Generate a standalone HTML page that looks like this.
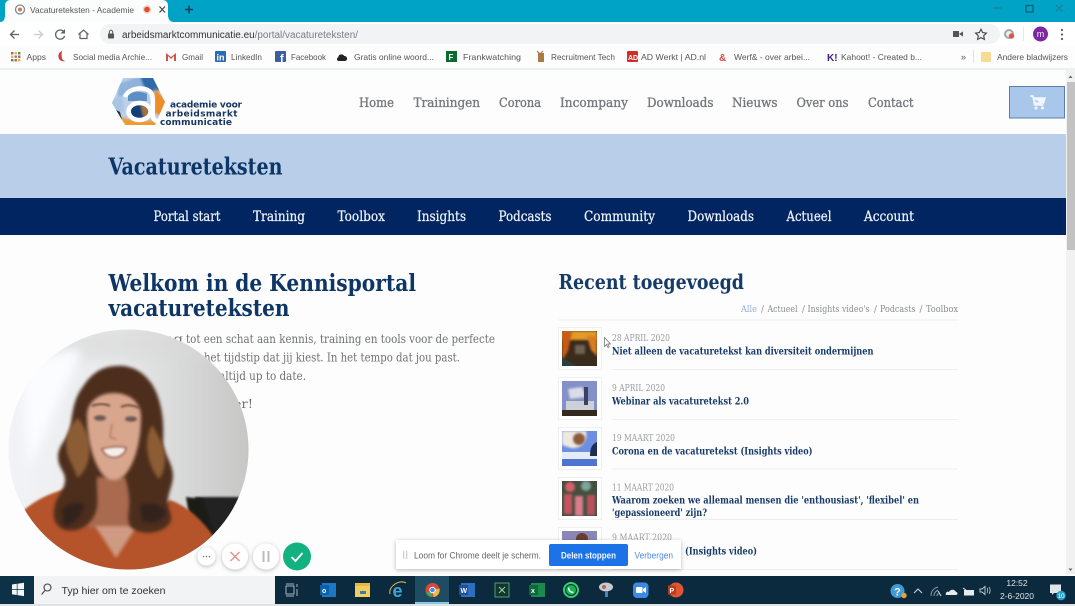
<!DOCTYPE html>
<html lang="nl"><head><meta charset="utf-8"><title>Vacatureteksten</title>
<style>
html,body{margin:0;padding:0;background:#fff;width:1075px;height:606px;overflow:hidden}
svg{display:block;position:absolute;left:0;top:0}
.s{font-family:"Liberation Sans",sans-serif}
.d{font-family:"DejaVu Sans","Liberation Sans",sans-serif}
.r{font-family:"DejaVu Serif","Liberation Serif",serif}
.sf{filter:url(#t)}
</style></head><body>
<svg width="1075" height="606" viewBox="0 0 1075 606" xmlns="http://www.w3.org/2000/svg">
<defs>
<filter id="t" x="-5%" y="-20%" width="110%" height="140%"><feGaussianBlur stdDeviation="0.35"/></filter>
<filter id="b1" x="-30%" y="-30%" width="160%" height="160%"><feGaussianBlur stdDeviation="1"/></filter>
<filter id="b4" x="-50%" y="-50%" width="200%" height="200%"><feGaussianBlur stdDeviation="5"/></filter>
<filter id="b2" x="-30%" y="-30%" width="160%" height="160%"><feGaussianBlur stdDeviation="1.600"/></filter>
<filter id="sh" x="-30%" y="-50%" width="160%" height="200%"><feDropShadow dx="0" dy="1" stdDeviation="2" flood-color="#000" flood-opacity=".28"/></filter>
<clipPath id="cam"><circle cx="128.500" cy="449.500" r="120"/></clipPath>
<clipPath id="hex"><path d="M123 78h30l12 24-10 23h-30l-13-22z"/></clipPath>
<linearGradient id="wall" x1="0" y1="0" x2="1" y2="0"><stop offset="0" stop-color="#f2f3f6"/><stop offset=".45" stop-color="#e9eaeb"/><stop offset="1" stop-color="#c6c6c5"/></linearGradient>
</defs>

<!-- Page -->
<rect width="1075" height="606" fill="#fdfdfe"/>
<rect x="0" y="134" width="1066" height="64" fill="#b8cee9"/>
<rect x="0" y="198" width="1066" height="37" fill="#002561"/>

<!-- Chrome tab strip -->
<rect width="1075" height="22" fill="#00a3c6"/>
<path d="M0 22C4 22 5 19 5 15V6C5 2 7 0 11 0H162C166 0 168 2 168 6V15C168 19 170 22 174 22Z" fill="#fbfdfd"/>
<rect y="22" width="1075" height="23" fill="#fff"/>
<rect y="45" width="1075" height="24" fill="#fdfdfd"/>
<rect y="68" width="1075" height="2" fill="#eceff3"/>
<circle cx="20" cy="9.500" r="4.500" fill="#fff" stroke="#7d8a9a" stroke-width="1.300"/><circle cx="20" cy="9.500" r="2" fill="#d57a45"/>
<g class="sf">
<text x="30" y="13" class="s" font-size="8.500" fill="#555" textLength="104" lengthAdjust="spacingAndGlyphs">Vacatureteksten - Academie</text>
<circle cx="147" cy="9.500" r="4.200" fill="#f8d0c8"/><circle cx="147" cy="9.500" r="2.800" fill="#e2492f"/>
<path d="M159.500 6.500l5.500 6M165 6.500l-5.500 6" stroke="#444" stroke-width="1.200"/>
<path d="M185 9.500h8M189 5.500v8" stroke="#0b3f58" stroke-width="1.500"/>
<path d="M994 8h8" stroke="#1f7f98" stroke-width="1.200"/>
<rect x="1026" y="5.500" width="7" height="6.500" fill="none" stroke="#0c6279" stroke-width="1.300"/>
<path d="M1056 5l6.500 6.500M1062.500 5l-6.500 6.500" stroke="#1f7f98" stroke-width="1.200"/>
</g>

<!-- Toolbar -->
<rect x="100" y="24" width="900" height="20" rx="10" fill="#f1f3f4"/>
<g class="sf">
<path d="M19 34.500h-8M14.500 30.500l-4 4 4 4" fill="none" stroke="#5f6368" stroke-width="1.300"/>
<path d="M34 34.500h8M38.500 30.500l4 4-4 4" fill="none" stroke="#c9cccf" stroke-width="1.300"/>
<path d="M64 32a4.600 4.600 0 1 0 .6 4" fill="none" stroke="#5f6368" stroke-width="1.300"/><path d="M65 29v4.500h-4.500z" fill="#5f6368"/>
<path d="M78.500 34.500l5-4.500 5 4.500M80 33.500v5h7v-5" fill="none" stroke="#5f6368" stroke-width="1.200"/>
<rect x="108" y="33.500" width="6" height="5" rx=".8" fill="#555"/><path d="M109.300 33.500v-1.500a1.700 1.700 0 0 1 3.400 0v1.500" fill="none" stroke="#555"/>
<text x="122" y="38" class="s" font-size="10" textLength="236" lengthAdjust="spacingAndGlyphs"><tspan fill="#333">arbeidsmarktcommunicatie.eu</tspan><tspan fill="#7a7d80">/portal/vacatureteksten/</tspan></text>
<rect x="953" y="31" width="6" height="6" fill="#555"/><path d="M959 34l4-2.500v5z" fill="#555"/>
<path d="M981 29.200l1.700 3.400 3.700.5-2.700 2.600.7 3.700-3.400-1.800-3.400 1.800.7-3.700-2.700-2.600 3.700-.5z" fill="none" stroke="#444" stroke-width="1.100"/>
<circle cx="1009" cy="34" r="5" fill="#9aa"/><circle cx="1009" cy="34" r="3" fill="#eee"/><circle cx="1011.500" cy="36" r="2.700" fill="#e4554a"/>
<rect x="1023" y="27" width=".8" height="14" fill="#e0e2e4"/>
<circle cx="1040.500" cy="34" r="7.500" fill="#7b27a2"/><text x="1040.500" y="37" class="s" font-size="9" fill="#f2e8f6" text-anchor="middle">m</text>
<circle cx="1062" cy="30" r="1.100" fill="#555"/><circle cx="1062" cy="34.500" r="1.100" fill="#555"/><circle cx="1062" cy="39" r="1.100" fill="#555"/>
</g>

<!-- Bookmarks -->
<g class="sf">
<g fill="#d8543f"><rect x="11" y="52" width="2.400" height="2.400"/><rect x="14.500" y="52" width="2.400" height="2.400" fill="#e6b53f"/><rect x="18" y="52" width="2.400" height="2.400" fill="#4f8a54"/><rect x="11" y="55.500" width="2.400" height="2.400" fill="#e6b53f"/><rect x="14.500" y="55.500" width="2.400" height="2.400" fill="#4f8de0"/><rect x="18" y="55.500" width="2.400" height="2.400"/><rect x="11" y="59" width="2.400" height="2.400" fill="#4f8a54"/><rect x="14.500" y="59" width="2.400" height="2.400"/><rect x="18" y="59" width="2.400" height="2.400" fill="#e6b53f"/></g>
<g class="s" font-size="8.500" fill="#555">
<text x="26.500" y="60" textLength="19.500" lengthAdjust="spacingAndGlyphs">Apps</text>
<text x="73" y="60" textLength="79" lengthAdjust="spacingAndGlyphs">Social media Archie...</text>
<text x="182" y="60" textLength="21" lengthAdjust="spacingAndGlyphs">Gmail</text>
<text x="231" y="60" textLength="31" lengthAdjust="spacingAndGlyphs">LinkedIn</text>
<text x="291" y="60" textLength="35" lengthAdjust="spacingAndGlyphs">Facebook</text>
<text x="354" y="60" textLength="80" lengthAdjust="spacingAndGlyphs">Gratis online woord...</text>
<text x="463" y="60" textLength="58" lengthAdjust="spacingAndGlyphs">Frankwatching</text>
<text x="551" y="60" textLength="64" lengthAdjust="spacingAndGlyphs">Recruitment Tech</text>
<text x="641" y="60" textLength="65" lengthAdjust="spacingAndGlyphs">AD Werkt | AD.nl</text>
<text x="734" y="60" textLength="76" lengthAdjust="spacingAndGlyphs">Werf&amp; - over arbei...</text>
<text x="841" y="60" textLength="81" lengthAdjust="spacingAndGlyphs">Kahoot! - Created b...</text>
<text x="997" y="60" textLength="71" lengthAdjust="spacingAndGlyphs">Andere bladwijzers</text>
</g>
<path d="M62 51c-3 1-4 4-3.500 6.500 .7 3 3.700 4.500 7.500 3.500-2 0-3.500-1-4-3-.6-2-.5-4.500 0-7z" fill="#c9433a"/>
<path d="M166 53v8h2v-5l3 3 3-3v5h2v-8l-5 4z" fill="#c8564d"/>
<rect x="215" y="51" width="11" height="11" rx="1" fill="#2a6cb0"/><text x="216.500" y="60.500" class="s" font-size="9" font-weight="bold" fill="#fff">in</text>
<rect x="275" y="51" width="11" height="11" rx="1" fill="#3b5f9f"/><text x="280" y="62" class="s" font-size="11" font-weight="bold" fill="#fff">f</text>
<path d="M339 61c-2.500 0-2.700-3-.7-3.800 .2-3 4-4 6-1.200 3 0 4 4 1 5z" fill="#222"/>
<rect x="446" y="51" width="11" height="11" fill="#106b2d"/><text x="448.500" y="60" class="s" font-size="8" font-weight="bold" fill="#fff">F</text>
<rect x="538" y="53" width="6" height="9" fill="#a77d43"/><path d="M537 51l3 3 3-3" stroke="#c55" fill="none"/>
<rect x="627" y="51" width="11" height="11" rx="1" fill="#d32d27"/><text x="628" y="60" class="s" font-size="7" font-weight="bold" fill="#fff">AD</text>
<text x="719" y="61" class="s" font-size="10" font-weight="bold" fill="#d24a4a">&amp;</text>
<text x="827" y="61" class="s" font-size="10" font-weight="bold" fill="#40207e">K!</text>
<text x="961" y="60" class="s" font-size="9" fill="#555">»</text>
<rect x="973" y="50" width=".8" height="13" fill="#dcdcdc"/>
<rect x="981" y="52" width="10" height="10" rx="1" fill="#f5dc92"/>
</g>

<!-- Logo -->
<g clip-path="url(#hex)">
<rect x="110" y="76" width="58" height="52" fill="#bcd0ea"/>
<path d="M118 84l22-8 8 10-30 12z" fill="#8fb3dc" filter="url(#b1)"/>
<path d="M140 76h16l6 14-16 2z" fill="#2f6bab" filter="url(#b1)"/>
<path d="M110 100l12-4 2 14-8 6z" fill="#a9c4e4" filter="url(#b1)"/>
<path d="M155 88l12 14-6 14-8-4z" fill="#ee8c28" filter="url(#b1)"/>
<path d="M118 116l10 12h32l4-8-30 1z" fill="#ef9a2e" filter="url(#b1)"/>
<path d="M112 108l8 4 2 8-4 1z" fill="#222d3d"/>
<path d="M128 94c6-3 14-3 19 0v7h-19z" fill="#5d8fc6"/>
<ellipse cx="140" cy="111" rx="9" ry="8" fill="#123f78"/>
<path d="M140 103l9 3v10l-6 2z" fill="#e7882a" opacity=".7" filter="url(#b1)"/>
</g>
<g fill="none" stroke="#fff">
<path d="M125 97c3-10 24-12 27-2 2 6 0 16 1 22 .6 4 5 5 12 5" stroke-width="4.500"/>
<ellipse cx="139.500" cy="111.500" rx="11" ry="8.500" stroke-width="4.500"/>
</g>
<g class="d sf" font-weight="bold" font-size="9" fill="#14355f">
<text x="170" y="107.500" textLength="72" lengthAdjust="spacing">academie voor</text>
<text x="165.500" y="116.500" textLength="72" lengthAdjust="spacing">arbeidsmarkt</text>
<text x="160" y="125" textLength="72" lengthAdjust="spacing">communicatie</text>
</g>

<!-- Top menu -->
<g class="r sf" font-size="13" fill="#75787b" stroke="#75787b" stroke-width=".35">
<text x="359" y="107" textLength="35" lengthAdjust="spacingAndGlyphs">Home</text>
<text x="413.500" y="107" textLength="66.500" lengthAdjust="spacingAndGlyphs">Trainingen</text>
<text x="499" y="107" textLength="42" lengthAdjust="spacingAndGlyphs">Corona</text>
<text x="560" y="107" textLength="68" lengthAdjust="spacingAndGlyphs">Incompany</text>
<text x="647" y="107" textLength="66.500" lengthAdjust="spacingAndGlyphs">Downloads</text>
<text x="732" y="107" textLength="45.500" lengthAdjust="spacingAndGlyphs">Nieuws</text>
<text x="796.500" y="107" textLength="52" lengthAdjust="spacingAndGlyphs">Over ons</text>
<text x="868" y="107" textLength="45.500" lengthAdjust="spacingAndGlyphs">Contact</text>
</g>

<!-- Cart -->
<rect x="1009.500" y="86.500" width="55" height="31.500" fill="#a9c7ea" stroke="#5a7ea8"/>
<g class="sf"><path d="M1030 96h3l1.500 9h9M1034 98h11l-1.500 5h-8.500z" fill="#f2f7fd" stroke="#f2f7fd" stroke-width="1.500"/><circle cx="1036" cy="108" r="1.500" fill="#f2f7fd"/><circle cx="1042.500" cy="108" r="1.500" fill="#f2f7fd"/></g>

<!-- Scrollbar -->
<rect x="1066" y="70" width="9" height="504" fill="#f1f1f1"/>
<rect x="1067" y="82" width="8" height="168" fill="#c2c2c2"/>
<path d="M1068.500 78l2-2.500 2 2.500z" fill="#666"/><path d="M1068.500 568.500l2 2.500 2-2.500z" fill="#666"/>

<!-- Band heading -->
<text x="108.500" y="174.500" class="r sf" font-size="23" font-weight="bold" fill="#0f3565" textLength="174" lengthAdjust="spacingAndGlyphs">Vacatureteksten</text>

<!-- Nav -->
<g class="r sf" font-size="13.500" fill="#eef2f8" stroke="#eef2f8" stroke-width=".25">
<text x="153.500" y="221" textLength="67" lengthAdjust="spacingAndGlyphs">Portal start</text>
<text x="253" y="221" textLength="52" lengthAdjust="spacingAndGlyphs">Training</text>
<text x="337.500" y="221" textLength="47.500" lengthAdjust="spacingAndGlyphs">Toolbox</text>
<text x="417" y="221" textLength="49" lengthAdjust="spacingAndGlyphs">Insights</text>
<text x="498.500" y="221" textLength="53" lengthAdjust="spacingAndGlyphs">Podcasts</text>
<text x="584" y="221" textLength="71" lengthAdjust="spacingAndGlyphs">Community</text>
<text x="687.500" y="221" textLength="66.500" lengthAdjust="spacingAndGlyphs">Downloads</text>
<text x="786.500" y="221" textLength="45" lengthAdjust="spacingAndGlyphs">Actueel</text>
<text x="864" y="221" textLength="50" lengthAdjust="spacingAndGlyphs">Account</text>
</g>

<!-- Left content -->
<g class="r sf" font-weight="bold" font-size="23" fill="#0f3565">
<text x="108.500" y="291" textLength="307.500" lengthAdjust="spacingAndGlyphs">Welkom in de Kennisportal</text>
<text x="108.500" y="316" textLength="181" lengthAdjust="spacingAndGlyphs">vacatureteksten</text>
</g>
<g class="r sf" font-size="12" fill="#6f7173">
<text x="118" y="343" textLength="65" lengthAdjust="spacingAndGlyphs">Toegang</text>
<text x="186" y="343" textLength="309" lengthAdjust="spacingAndGlyphs">tot een schat aan kennis, training en tools voor de perfecte</text>
<text x="110" y="361.500" textLength="90" lengthAdjust="spacingAndGlyphs">vacaturetekst op</text>
<text x="204" y="361.500" textLength="256" lengthAdjust="spacingAndGlyphs">het tijdstip dat jij kiest. In het tempo dat jou past.</text>
<text x="150" y="380" textLength="60" lengthAdjust="spacingAndGlyphs">En met content</text>
<text x="219" y="380" textLength="87" lengthAdjust="spacingAndGlyphs">altijd up to date.</text>
<text x="170" y="408" textLength="83" lengthAdjust="spacingAndGlyphs">Veel plezier!</text>
</g>

<!-- Right content -->
<text x="558.500" y="289" class="r sf" font-size="20.500" font-weight="bold" fill="#183a66" textLength="185.500" lengthAdjust="spacingAndGlyphs">Recent toegevoegd</text>
<g class="r sf" font-size="9" fill="#8b8d90">
<text x="741" y="312" fill="#8fadd6" textLength="16" lengthAdjust="spacingAndGlyphs">Alle</text>
<text x="761" y="312">/</text>
<text x="767.500" y="312" textLength="30" lengthAdjust="spacingAndGlyphs">Actueel</text>
<text x="802" y="312">/</text>
<text x="807.500" y="312" textLength="62" lengthAdjust="spacingAndGlyphs">Insights video's</text>
<text x="874" y="312">/</text>
<text x="880" y="312" textLength="35.500" lengthAdjust="spacingAndGlyphs">Podcasts</text>
<text x="919.500" y="312">/</text>
<text x="926" y="312" textLength="32" lengthAdjust="spacingAndGlyphs">Toolbox</text>
</g>
<g fill="#eceef0">
<rect x="558" y="319.500" width="400" height="1"/>
<rect x="612" y="369" width="346" height="1"/>
<rect x="612" y="419" width="346" height="1"/>
<rect x="612" y="468.500" width="346" height="1"/>
<rect x="612" y="519" width="346" height="1"/>
<rect x="612" y="569" width="346" height="1"/>
</g>
<g fill="#fff" stroke="#eef0f2">
<rect x="558.500" y="327.500" width="43" height="42"/>
<rect x="558.500" y="377.500" width="43" height="42"/>
<rect x="558.500" y="427.500" width="43" height="42"/>
<rect x="558.500" y="477.500" width="43" height="42"/>
<rect x="558.500" y="527.500" width="43" height="42"/>
</g>
<!-- thumbnails -->
<g>
<svg x="562" y="331" width="35" height="35" viewBox="0 0 35 35"><rect width="35" height="35" fill="#3a2b1d"/><rect width="35" height="9" fill="#e39a28" filter="url(#b1)"/><path d="M0 0h10l-4 20L0 30z" fill="#c85a18" filter="url(#b1)"/><path d="M25 5h10v20l-6-6z" fill="#d77e20" filter="url(#b1)"/><rect x="13" y="14" width="10" height="9" fill="#6d6354" filter="url(#b1)"/><path d="M0 26l14 9H0z" fill="#2c3f3f"/></svg>
<svg x="562" y="381" width="35" height="35" viewBox="0 0 35 35"><rect width="35" height="35" fill="#8390c9"/><path d="M6 8l14-2 4 10-16 2z" fill="#d9dde8" filter="url(#b1)"/><rect x="4" y="20" width="28" height="9" fill="#cdd0d6"/><rect x="0" y="29" width="35" height="6" fill="#34291f"/><rect x="22" y="6" width="4" height="18" fill="#3a4260"/></svg>
<svg x="562" y="431" width="35" height="35" viewBox="0 0 35 35"><rect width="35" height="35" fill="#6c8fe2"/><path d="M0 0h24c2 10-4 18-15 17L0 14z" fill="#efe9e0" filter="url(#b1)"/><circle cx="17" cy="8" r="6" fill="#8a5a3c" filter="url(#b1)"/><rect y="21" width="35" height="7" fill="#e6ecf6"/><path d="M28 25c0-8 2-12 7-14v14z" fill="#1d2f52"/><rect y="28" width="35" height="7" fill="#4f74cf"/></svg>
<svg x="562" y="481" width="35" height="35" viewBox="0 0 35 35"><rect width="35" height="35" fill="#44503f"/><circle cx="8" cy="6" r="5" fill="#d95f68" filter="url(#b1)"/><circle cx="24" cy="5" r="5" fill="#7fa29a" filter="url(#b1)"/><rect x="2" y="13" width="8" height="20" fill="#c6525f" filter="url(#b1)"/><rect x="13" y="15" width="8" height="20" fill="#d87d89" filter="url(#b1)"/><rect x="25" y="14" width="8" height="20" fill="#b9515d" filter="url(#b1)"/></svg>
<svg x="562" y="531" width="35" height="14" viewBox="0 0 35 14"><rect width="35" height="14" fill="#8a86b8"/><circle cx="20" cy="8" r="6" fill="#6a3e2d"/></svg>
</g>
<g class="r sf">
<g font-size="9" fill="#9a9c9e">
<text x="612" y="341" textLength="58" lengthAdjust="spacingAndGlyphs">28 APRIL 2020</text>
<text x="612" y="391" textLength="53" lengthAdjust="spacingAndGlyphs">9 APRIL 2020</text>
<text x="612" y="441" textLength="63" lengthAdjust="spacingAndGlyphs">19 MAART 2020</text>
<text x="612" y="490.500" textLength="62" lengthAdjust="spacingAndGlyphs">11 MAART 2020</text>
<text x="612" y="540.500" textLength="60" lengthAdjust="spacingAndGlyphs">9 MAART 2020</text>
</g>
<g font-size="10.500" font-weight="bold" fill="#193a68">
<text x="612" y="354.500" textLength="261.500" lengthAdjust="spacingAndGlyphs">Niet alleen de vacaturetekst kan diversiteit ondermijnen</text>
<text x="612" y="404.500" textLength="137" lengthAdjust="spacingAndGlyphs">Webinar als vacaturetekst 2.0</text>
<text x="612" y="454.500" textLength="200.500" lengthAdjust="spacingAndGlyphs">Corona en de vacaturetekst (Insights video)</text>
<text x="612" y="503.500" textLength="307" lengthAdjust="spacingAndGlyphs">Waarom zoeken we allemaal mensen die 'enthousiast', 'flexibel' en</text>
<text x="612" y="516" textLength="95" lengthAdjust="spacingAndGlyphs">'gepassioneerd' zijn?</text>
<text x="685" y="554.500" textLength="72" lengthAdjust="spacingAndGlyphs">(Insights video)</text>
</g>
</g>
<!-- cursor -->
<path d="M604.500 337.500v9l2-2 1.500 3 1.200-.6-1.500-2.900h2.800z" fill="#fff" stroke="#666" stroke-width=".7"/>

<!-- Webcam bubble -->
<circle cx="128.500" cy="449.500" r="120" fill="#eee"/>
<g clip-path="url(#cam)">
<rect x="8" y="329" width="242" height="242" fill="url(#wall)"/>
<rect x="8" y="329" width="242" height="30" fill="#d9d9d9" opacity=".6" filter="url(#b4)"/>
<path d="M22 370c20-15 40-20 60-20-14 30-40 90-54 120z" fill="#fbfcff" filter="url(#b4)"/>
<path d="M195 497h55v50h-55z" fill="#232321" filter="url(#b1)"/>
<path d="M186 497l17 2 12 40-20 12z" fill="#1b1a19" filter="url(#b1)"/>
<!-- body -->
<path d="M24 510c14-12 28-17 44-22l30 36h40l32-24c14 5 30 16 46 40v40H24z" fill="#b5532a" filter="url(#b1)"/>
<!-- neck and V neckline -->
<rect x="88" y="470" width="54" height="58" fill="#a96a50" filter="url(#b2)"/>
<path d="M95 526h42l-21 32z" fill="#cf9a84" filter="url(#b2)"/>
<!-- hair -->
<path d="M115 366c18-2 34 8 42 28 6 16 7 32 6 48 0 12 10 20 10 34 0 10-6 18-5 28 1 8 6 14 1 20-8 10-26 11-36 5-6-4-5-12-4-22 1-10-1-20-4-30h-28c-1 12 2 24-1 34-3 12-16 22-30 19-12-3-14-14-11-25 2-9 9-14 10-24 1-9-7-13-7-24 0-11 8-17 12-27 2-14 3-30 12-42 8-13 18-21 33-22z" fill="#4d2d1f" filter="url(#b2)"/>
<path d="M78 418c-9 8-14 20-11 34 2 10 8 16 10 26 9-6 14-20 12-34-1-10-5-18-11-26zM152 425c6 10 14 22 13 36 0 7-3 14-6 18-7-8-12-22-12-34 0-8 2-14 5-20z" fill="#8c5d36" filter="url(#b2)"/>
<path d="M62 510c8-8 14-8 22-6-2 12-8 20-20 22zM140 505c10-3 20-1 26 6-2 10-14 14-24 10z" fill="#33201a" filter="url(#b2)"/>
<!-- face -->
<path d="M87 415c0-13 12-22 27-22 15 0 27 9 27 24 0 24-6 46-16 58-7 7-16 7-22 0-10-12-16-36-16-60z" fill="#d8a68d" filter="url(#b2)"/>
<path d="M92 406c5-2 12-3 18 0M121 407c6-3 12-2 18 1" stroke="#4a2f24" stroke-width="1.500" fill="none" filter="url(#b1)"/>
<ellipse cx="100" cy="418" rx="6" ry="2.800" fill="#6d5a55" filter="url(#b1)"/>
<ellipse cx="131" cy="419" rx="6" ry="2.800" fill="#6d5a55" filter="url(#b1)"/>
<path d="M112 424l-2 13 6 2" fill="none" stroke="#b97c62" stroke-width="1.500" filter="url(#b1)"/>
<path d="M102 449c8-2 18-3 24-1-2 10-18 14-24 1z" fill="#f6efe8" stroke="#934a45" stroke-width="1.500" filter="url(#b1)"/>
</g>

<!-- Loom controls -->
<g>
<circle cx="206.500" cy="556.500" r="9" fill="#fff" filter="url(#sh)"/>
<circle cx="235" cy="556.500" r="13" fill="#fff" filter="url(#sh)"/>
<circle cx="266" cy="556.500" r="13" fill="#fff" filter="url(#sh)"/>
<circle cx="297" cy="556.500" r="14" fill="#11b27f"/>
<circle cx="203.500" cy="556.500" r=".8" fill="#777"/><circle cx="206.500" cy="556.500" r=".8" fill="#777"/><circle cx="209.500" cy="556.500" r=".8" fill="#777"/>
<path d="M230.500 552l9 9M239.500 552l-9 9" stroke="#e7908a" stroke-width="1.400"/>
<path d="M263.500 551v11M268.500 551v11" stroke="#b9bcc0" stroke-width="2"/>
<path d="M291.500 557l4 4 7-8" fill="none" stroke="#fff" stroke-width="1.800"/>
</g>

<!-- Loom share bar -->
<rect x="396" y="540" width="285" height="29" fill="#fff" filter="url(#sh)"/>
<g class="sf">
<rect x="403" y="551" width="1.300" height="8" fill="#cfd1d4"/><rect x="406" y="551" width="1.300" height="8" fill="#cfd1d4"/>
<text x="414" y="558.500" class="s" font-size="9" fill="#666" textLength="127" lengthAdjust="spacingAndGlyphs">Loom for Chrome deelt je scherm.</text>
<rect x="549" y="544" width="79" height="22" rx="2" fill="#1a73e8"/>
<text x="561" y="558.500" class="s" font-size="9" font-weight="bold" fill="#f2f7ff" textLength="55" lengthAdjust="spacingAndGlyphs">Delen stoppen</text>
<text x="634.500" y="558.500" class="s" font-size="9" fill="#4f87dd" textLength="38.500" lengthAdjust="spacingAndGlyphs">Verbergen</text>
</g>

<!-- Taskbar -->
<rect y="576" width="1075" height="28" fill="#0c2a3d"/>
<rect y="604" width="1075" height="2" fill="#dfe3e6"/>
<rect x="0" y="576" width="34" height="28" fill="#0d3146"/>
<rect x="34" y="576" width="241" height="28" fill="#f2f3f4"/>
<rect x="415" y="576" width="34" height="28" fill="#1f4c63"/>
<rect x="415" y="602" width="34" height="2" fill="#86c9e0"/>
<g class="sf">
<path d="M12 584.500l4.800-.7v5.200H12zM17.500 583.700l6.500-1v6.300h-6.500zM12 589.800h4.800v5.200l-4.800-.7zM17.500 589.800H24v6.300l-6.500-1z" fill="#f2f6f8"/>
<circle cx="47.500" cy="587.500" r="3.500" fill="none" stroke="#444" stroke-width="1.100"/><path d="M45 590.500l-3.500 4" stroke="#444" stroke-width="1.100"/>
<text x="61.500" y="594" class="s" font-size="10.500" fill="#333" textLength="104" lengthAdjust="spacingAndGlyphs">Typ hier om te zoeken</text>
<path d="M286 586h8v8h-8zM286 584h8M286 596h8" fill="none" stroke="#a8b4bc" stroke-width="1"/><path d="M297 584v3M297 589v7" stroke="#a8b4bc"/>
<!-- outlook -->
<rect x="322" y="583" width="14" height="14" fill="#1d78c7"/><rect x="320" y="585" width="9" height="10" fill="#0c5ea8"/><text x="322" y="593" class="s" font-size="7" fill="#fff" font-weight="bold">o</text>
<!-- explorer -->
<rect x="355" y="583" width="15" height="4" fill="#e8b93c"/><rect x="355" y="586" width="15" height="11" fill="#f2cd62"/><rect x="360" y="591" width="6" height="3" fill="#3f7ea8"/>
<!-- IE -->
<text x="397.500" y="597" class="s" font-size="18" font-weight="bold" fill="#3ea4dc" text-anchor="middle">e</text>
<path d="M390 594c-2-8 10-15 16-11" fill="none" stroke="#e5c34a" stroke-width="1"/>
<!-- chrome -->
<circle cx="432.500" cy="590" r="7" fill="#d9483b"/><path d="M432.500 590l-6.500 3a7 7 0 0 0 6 4z" fill="#4ca25c"/><path d="M432.500 590l1 7a7 7 0 0 0 6-8.500z" fill="#eebc3c"/><circle cx="432.500" cy="590" r="3.200" fill="#fff"/><circle cx="432.500" cy="590" r="2.300" fill="#4b8de4"/>
<!-- word -->
<rect x="461" y="583" width="14" height="14" fill="#2d6ec0"/><rect x="459" y="585" width="9" height="10" fill="#1c4f9c"/><text x="460.500" y="593" class="s" font-size="7" fill="#fff" font-weight="bold">W</text>
<!-- xmind-like -->
<rect x="495" y="583" width="14" height="14" fill="#14352c" stroke="#4e9e7a"/><path d="M499 587l6 6M505 587l-6 6" stroke="#8ddbb4"/>
<!-- excel -->
<rect x="531" y="583" width="14" height="14" fill="#1e8a50"/><rect x="529" y="585" width="9" height="10" fill="#0e6a3a"/><text x="531" y="593" class="s" font-size="7" fill="#fff" font-weight="bold">x</text>
<!-- whatsapp -->
<circle cx="571" cy="590" r="7" fill="none" stroke="#36d06b" stroke-width="2"/><circle cx="571" cy="590" r="5" fill="#12b352"/><path d="M568.500 587.500c0 3 2 5 5 5" stroke="#fff" stroke-width="1.400" fill="none"/>
<!-- misc -->
<ellipse cx="606" cy="587" rx="7" ry="4.500" fill="#c8ccd0"/><circle cx="604" cy="587" r="2" fill="#b96464"/><rect x="605" y="591" width="3" height="6" fill="#4a83b8"/>
<!-- zoom -->
<rect x="633" y="582.500" width="15.500" height="15.500" rx="4" fill="#3d87e6"/><rect x="636" y="587" width="6.500" height="6" rx="1" fill="#fff"/><path d="M643 589l3-2v6l-3-2z" fill="#fff"/>
<!-- powerpoint -->
<circle cx="676" cy="590" r="7.500" fill="#df5631"/><rect x="668" y="585.500" width="8" height="9" fill="#b83c1c"/><text x="669.500" y="593" class="s" font-size="7" fill="#fff" font-weight="bold">P</text>
<!-- tray -->
<circle cx="897.500" cy="591" r="7" fill="#3f9ad8"/><text x="897.500" y="595.500" class="s" font-size="11" font-weight="bold" fill="#fff" text-anchor="middle">?</text><circle cx="904" cy="595.500" r="2.700" fill="#e8a23c"/>
<path d="M914 593l4-4 4 4" fill="none" stroke="#cfd6db" stroke-width="1"/>
<path d="M931 596c0-5 3-8 7-9M934 596c0-3 2-5 4-6M937 596c0-1 .5-2 1.500-2.500" fill="none" stroke="#8b9aa4" stroke-width="1"/><path d="M938 591l3 5" stroke="#dbe0e3"/>
<path d="M946 595c-1-3 2-4 3-3 1-3 6-3 7 0 2 0 2 3 0 3z" fill="#e8ecef"/>
<rect x="964" y="590" width="10" height="5.500" fill="#e8ecef"/><path d="M963 588l3 2" stroke="#e8ecef"/>
<path d="M980 589h2l3-2.500v8l-3-2.500h-2z" fill="none" stroke="#c6ced3" stroke-width=".9"/><path d="M987 588c1 1 1 4 0 5M989 587c1.500 2 1.500 5 0 7" fill="none" stroke="#c6ced3" stroke-width=".8"/>
<text x="1017" y="586" class="s" font-size="8.500" fill="#dde3e7" text-anchor="middle">12:52</text>
<text x="1017" y="599" class="s" font-size="8.500" fill="#dde3e7" text-anchor="middle">2-6-2020</text>
<path d="M1050 584.500h11v8.500h-7l-2 2v-2h-2z" fill="#dfe5e9"/>
<circle cx="1061" cy="595.500" r="4.700" fill="#28a0c8"/><text x="1061" y="598" class="s" font-size="6.500" fill="#fff" text-anchor="middle">10</text>
</g>
</svg>
</body></html>
